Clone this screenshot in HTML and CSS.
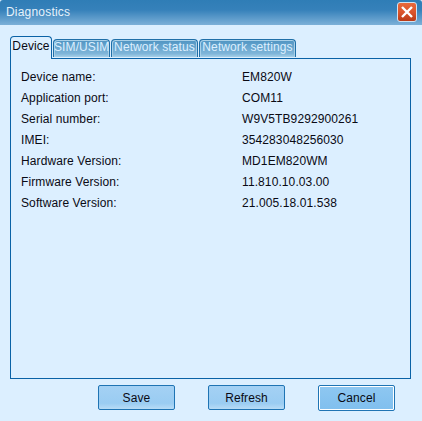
FILE: index.html
```html
<!DOCTYPE html>
<html lang="en">
<head>
    <meta charset="UTF-8">
    <title>Diagnostics</title>
    <link rel="stylesheet" href="styles.css">
</head>
<body>

    <div id="dialog">
        <!--title bar-->
        <div class="title">
            <span>Diagnostics</span>
            <div class="close">
                <svg width="14" height="14" viewBox="0 0 14 14">
                    <path d="M2 2L12 12M12 2L2 12" stroke="#fff" stroke-width="2.4" fill="none"/>
                </svg>
            </div>
        </div>

        <!--tabs-->
        <ul class="tabs">
            <li class="active t1">Device</li>
            <li class="t2">SIM/USIM</li>
            <li class="t3">Network status</li>
            <li class="t4">Network settings</li>
        </ul>

        <!--info panel-->
        <div class="panel">
            <dl>
                <dt>Device name:</dt><dd>EM820W</dd>
                <dt>Application port:</dt><dd>COM11</dd>
                <dt>Serial number:</dt><dd>W9V5TB9292900261</dd>
                <dt>IMEI:</dt><dd>354283048256030</dd>
                <dt>Hardware Version:</dt><dd>MD1EM820WM</dd>
                <dt>Firmware Version:</dt><dd>11.810.10.03.00</dd>
                <dt>Software Version:</dt><dd>21.005.18.01.538</dd>
            </dl>
        </div>

        <!--buttons-->
        <div class="btns">
            <button>Save</button>
            <button>Refresh</button>
            <button class="focus">Cancel</button>
        </div>
    </div>

</body>
</html>
```

FILE: styles.css
```css
html,body{margin:0;padding:0;}
body{font-family: "Liberation Sans",Arial,sans-serif;font-size:12px;letter-spacing:.1px;color:#0a0a14;background:#dcefff;}
ul,li,dl,dt,dd{margin:0;padding:0;list-style:none;}

#dialog{
    width: 422px;
    height: 421px;
    overflow: hidden;
    background: #dcefff;
}

.title{
    display: flex;
    justify-content: space-between;
    height: 25px;
    padding: 2px 5px 0 6px;
    box-sizing: border-box;
    border-radius: 3px 3px 0 0;
    background: linear-gradient(#2f7db6 0,#3681ba 40%,#7cb0d8 100%);
    color: #e6f2fb;
    font-size: 12px;
    letter-spacing: .2px;
    line-height: 20px;
}
.close{
    display: flex;
    align-items: center;
    justify-content: center;
    width: 20px;
    height: 20px;
    box-sizing: border-box;
    border: 1px solid #cfe2f2;
    border-radius: 3px;
    background: linear-gradient(#ea6a3c,#d9532a 55%,#b93a16);
}

.tabs{
    display: flex;
    height: 23px;
    margin: 11px 0 -1px 10px;
    position: relative;
}
.tabs li{
    height: 18px;
    margin: 3px 1px 0 0;
    box-sizing: border-box;
    border: 1px solid #1f6fa8;
    border-bottom: 0;
    border-radius: 4px 4px 0 0;
    background: linear-gradient(#4f94c2,#7fb5d9 80%,#a5cfe8);
    box-shadow: inset 1px 1px 0 #a9d0e8,inset -1px 0 0 #a9d0e8;
    color: #dcefff;
    line-height: 15px;
    text-align: center;
}
.tabs li.t1{width: 42px;}
.tabs li.t2{width: 57px;}
.tabs li.t3{width: 87px;}
.tabs li.t4{width: 97px;}
.tabs li.active{
    height: 23px;
    margin-top: 0;
    background: #dcefff;
    box-shadow: none;
    border-color: #0a62a6;
    color: #0a0a14;
    line-height: 19px;
    position: relative;
    z-index: 1;
}

.panel{
    width: 401px;
    height: 321px;
    margin-left: 10px;
    box-sizing: border-box;
    border: 1px solid #0a62a6;
    padding: 8px 0 0 10px;
}
.panel dl{
    display: grid;
    grid-template-columns: 221px 1fr;
    grid-auto-rows: 21px;
    line-height: 21px;
}

.btns{
    display: flex;
    gap: 33px;
    margin: 6px 0 0 98px;
}
.btns button{
    width: 77px;
    height: 25px;
    padding: 0;
    border: 1px solid #1f74b4;
    border-radius: 2px;
    background: linear-gradient(#a4d1f4,#9accf2 75%,#b8dcf6);
    font: 12px "Liberation Sans",Arial,sans-serif;
    letter-spacing: .1px;
    color: #0a0a14;
}
.btns button.focus{
    height: 26px;
    box-shadow: inset 0 0 0 1px #fff;
    background: linear-gradient(#8ec7f1,#80bfee);
}
```
